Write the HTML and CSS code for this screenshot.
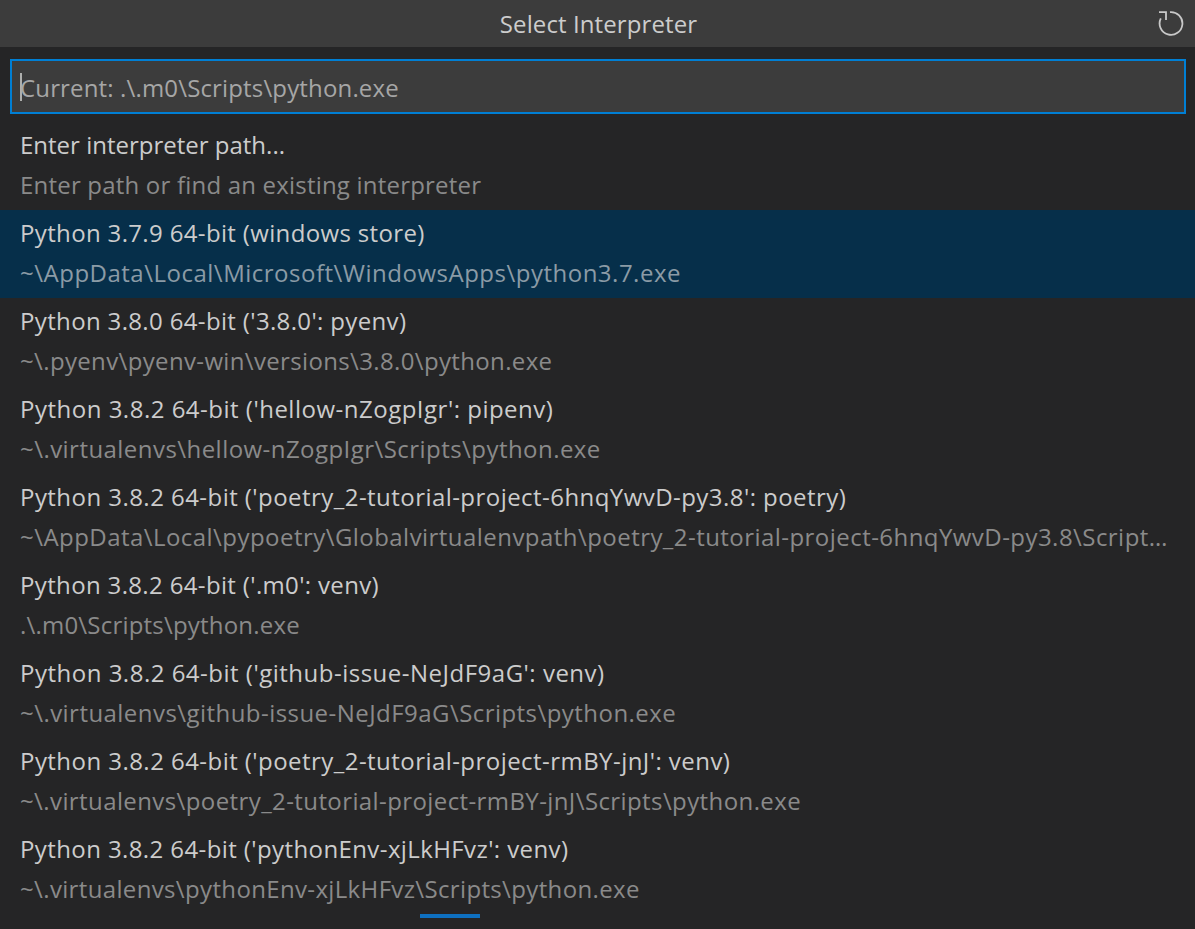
FILE: index.html
```html
<!DOCTYPE html>
<html lang="en">
<head>
<meta charset="utf-8">
<title>Select Interpreter</title>
<link rel="stylesheet" href="styles.css">
</head>
<body>
<div class="picker">
  <header class="title-bar">
    <span class="title">Select Interpreter</span>
    <button class="refresh" aria-label="Refresh">
      <svg width="28" height="28" viewBox="0 0 28 28" fill="none" stroke="#c8c8c8" stroke-width="1.8">
        <path d="M12 3.1A11.4 11.4 0 1 1 2.8 9.4"/>
        <path d="M1 3.2H8V11"/>
      </svg>
    </button>
  </header>
  <div class="input-wrap">
    <div class="input"><span class="caret"></span><span class="placeholder sp-15">Current: .\.m0\Scripts\python.exe</span></div>
  </div>
  <ul class="list">
    <li class="item"><div class="label">Enter interpreter path...</div><div class="detail sp-20">Enter path or find an existing interpreter</div></li>
    <li class="item active"><div class="label sp-35">Python 3.7.9 64-bit (windows store)</div><div class="detail sp-50">~\AppData\Local\Microsoft\WindowsApps\python3.7.exe</div></li>
    <li class="item"><div class="label sp-35">Python 3.8.0 64-bit ('3.8.0': pyenv)</div><div class="detail sp-35">~\.pyenv\pyenv-win\versions\3.8.0\python.exe</div></li>
    <li class="item"><div class="label sp-50">Python 3.8.2 64-bit ('hellow-nZogpIgr': pipenv)</div><div class="detail sp-45">~\.virtualenvs\hellow-nZogpIgr\Scripts\python.exe</div></li>
    <li class="item"><div class="label sp-45">Python 3.8.2 64-bit ('poetry_2-tutorial-project-6hnqYwvD-py3.8': poetry)</div><div class="detail sp-45">~\AppData\Local\pypoetry\Globalvirtualenvpath\poetry_2-tutorial-project-6hnqYwvD-py3.8\Scripts\python.exe</div></li>
    <li class="item"><div class="label sp-35">Python 3.8.2 64-bit ('.m0': venv)</div><div class="detail sp-20">.\.m0\Scripts\python.exe</div></li>
    <li class="item"><div class="label sp-50">Python 3.8.2 64-bit ('github-issue-NeJdF9aG': venv)</div><div class="detail sp-45">~\.virtualenvs\github-issue-NeJdF9aG\Scripts\python.exe</div></li>
    <li class="item"><div class="label sp-45">Python 3.8.2 64-bit ('poetry_2-tutorial-project-rmBY-jnJ': venv)</div><div class="detail sp-40">~\.virtualenvs\poetry_2-tutorial-project-rmBY-jnJ\Scripts\python.exe</div></li>
    <li class="item"><div class="label sp-40">Python 3.8.2 64-bit ('pythonEnv-xjLkHFvz': venv)</div><div class="detail sp-35">~\.virtualenvs\pythonEnv-xjLkHFvz\Scripts\python.exe</div></li>
  </ul>
  <div class="progress"><span class="progress-bar"></span></div>
</div>
</body>
</html>
```

FILE: styles.css
```css
* { box-sizing: border-box; }
html, body { margin: 0; padding: 0; height: 100%; overflow: hidden; background: #252526; }
body { font-family: "Open Sans", "Noto Sans", sans-serif; font-size: 24px; color: #ccc; }
.picker { width: 1195px; height: 929px; display: flex; flex-direction: column; }
.title-bar { height: 47px; flex: none; background: #3c3c3c; display: flex; align-items: center; justify-content: center; padding-left: 2px; position: relative; }
.title { font-size: 24px; color: #ccc; letter-spacing: 0.1px; }
.refresh { position: absolute; right: 9px; top: 9px; width: 28px; height: 28px; padding: 0; border: 0; background: none; }
.refresh svg { display: block; }
.input-wrap { padding: 12px 9px 0 10px; flex: none; }
.input { height: 55px; background: #3c3c3c; border: 2px solid #007fd4; display: flex; align-items: center; padding: 1px 0 0 8px; }
.caret { width: 2px; height: 28px; background: #aeafad; margin-right: -2px; }
.placeholder { color: #a6a6a6; font-size: 24px; white-space: nowrap; }
.list { list-style: none; margin: 8px 0 0; padding: 0; flex: none; }
.item { height: 88px; padding: 0 20px 2px 20px; display: flex; flex-direction: column; justify-content: center; }
.label, .detail { height: 40px; line-height: 40px; white-space: nowrap; overflow: hidden; text-overflow: ellipsis; }
.label { color: #ccc; }
.detail { color: #8a8a8a; }
.active { background: #062f4a; }
.active .detail { color: #8b9ba6; }
.progress { flex: none; height: 4px; position: relative; }
.progress-bar { position: absolute; left: 420px; top: 0; width: 60px; height: 4px; background: #0e70c0; }
.sp-15 { letter-spacing: 0.15px; }
.sp-20 { letter-spacing: 0.2px; }
.sp-35 { letter-spacing: 0.35px; }
.sp-40 { letter-spacing: 0.4px; }
.sp-45 { letter-spacing: 0.45px; }
.sp-50 { letter-spacing: 0.5px; }
```
